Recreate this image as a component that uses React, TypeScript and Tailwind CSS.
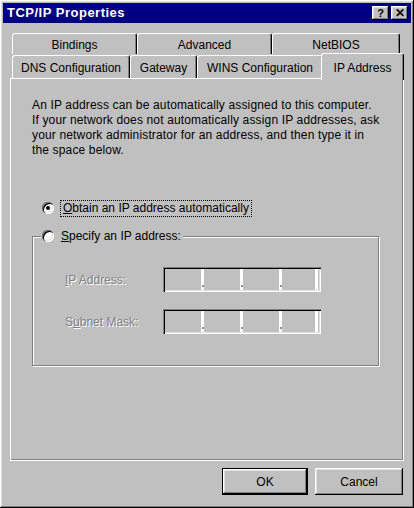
import React from "react";

const raised =
  "shadow-[inset_-1px_-1px_0_#000,inset_1px_1px_0_#fff,inset_-2px_-2px_0_#808080,inset_2px_2px_0_#dfdfdf]";

const Tab = ({ label, w, front }: { label: string; w: string; front?: boolean }) => (
  <div
    className={`${w} h-full flex justify-center items-center border-t border-l border-white border-r border-r-black rounded-t-[3px] shadow-[inset_-1px_0_0_#808080] ${
      front ? "pt-[1px]" : "pt-[2px]"
    }`}
  >
    {label}
  </div>
);

const Radio = ({ checked }: { checked?: boolean }) => (
  <span className="w-[12px] h-[12px] rounded-full bg-white flex items-center justify-center shadow-[inset_1px_1px_0_#808080,inset_2px_2px_0_#000,inset_-1px_-1px_0_#fff,inset_-2px_-2px_0_#dfdfdf]">
    {checked && <span className="w-[4px] h-[4px] rounded-full bg-black" />}
  </span>
);

const IpField = () => (
  <div className="w-[158px] h-[25px] flex px-[2px] py-[2px] shadow-[inset_1px_1px_0_#808080,inset_2px_2px_0_#000,inset_-1px_-1px_0_#fff,inset_-2px_-2px_0_#dfdfdf]">
    {[0, 1, 2, 3].map((i) => (
      <div key={i} className="flex">
        <div className={i === 3 ? "w-[33px]" : "w-[36px]"} />
        <div className="w-[3px] bg-white flex flex-col justify-end items-center pb-[3px]">
          {i < 3 && <span className="w-[2px] h-[2px] bg-[#909090]" />}
        </div>
      </div>
    ))}
  </div>
);

const disabled = "text-[#808080] [text-shadow:1px_1px_0_#fff]";

export default function App() {
  return (
    <div
      className={`w-[414px] h-[508px] bg-[#c0c0c0] p-[3px] flex flex-col text-[12px] text-black ${raised}`}
      style={{ fontFamily: '"Liberation Sans", Arial, sans-serif' }}
    >
      {/* title bar */}
      <div className="h-[20px] bg-[#000080] flex items-center justify-between pl-[4px] pr-[3px]">
        <span className="text-white font-bold text-[13px] tracking-[0.5px]">TCP/IP Properties</span>
        <div className="flex gap-[2px]">
          <div className={`w-[17px] h-[14px] bg-[#c0c0c0] flex items-center justify-center font-bold text-[11px] leading-none ${raised}`}>?</div>
          <div className={`w-[17px] h-[14px] bg-[#c0c0c0] flex items-center justify-center font-bold text-[12px] leading-none ${raised}`}>✕</div>
        </div>
      </div>

      <div className="flex flex-col px-[7px] pt-[10px]">
        {/* tabs */}
        <div className="flex flex-col ml-[2px]">
          <div className="flex h-[21px]">
            <Tab label="Bindings" w="w-[125px]" />
            <Tab label="Advanced" w="w-[135px]" />
            <Tab label="NetBIOS" w="w-[128px]" />
          </div>
          <div className="flex h-[24px] items-end">
            <div className="flex h-[23px]">
              <Tab label="DNS Configuration" w="w-[118px]" front />
              <Tab label="Gateway" w="w-[67px]" front />
              <Tab label="WINS Configuration" w="w-[126px]" front />
            </div>
            <div className="relative z-10 -ml-[2px] -mb-[2px] w-[83px] h-[27px] bg-[#c0c0c0] flex justify-center pt-[5px] border-t border-l border-white border-r border-r-black rounded-t-[3px] shadow-[inset_-1px_0_0_#808080]">
              IP Address
            </div>
          </div>
        </div>

        {/* panel */}
        <div className="w-[394px] h-[383px] border-t border-l border-white border-r border-b border-black shadow-[inset_-1px_-1px_0_#808080] pl-[21px] pt-[19px] flex flex-col">
          <p className="leading-[15px] tracking-[0.15px]">
            An IP address can be automatically assigned to this computer.
            <br />
            If your network does not automatically assign IP addresses, ask
            <br />
            your network administrator for an address, and then type it in
            <br />
            the space below.
          </p>

          <div className="mt-[41px] h-[18px] flex items-center pl-[10px] gap-[6px]">
            <Radio checked />
            <span className="border border-dotted border-black px-[2px] leading-[15px]">
              <span className="underline">O</span>btain an IP address automatically
            </span>
          </div>

          <fieldset className="mt-[10px] w-[347px] h-[139px] border border-[#808080] shadow-[inset_1px_1px_0_#fff,1px_1px_0_#fff]">
            <legend className="ml-[8px] pr-[2px] pl-[1px] bg-[#c0c0c0] h-[18px] flex items-center gap-[7px]">
              <Radio />
              <span className="leading-[15px]">
                <span className="underline">S</span>pecify an IP address:
              </span>
            </legend>

            <div className="grid grid-cols-[98px_158px] gap-y-[17px] pl-[32px] pt-[22px] items-center">
              <span className={disabled}>
                <span className="underline">I</span>P Address:
              </span>
              <IpField />
              <span className={disabled}>
                S<span className="underline">u</span>bnet Mask:
              </span>
              <IpField />
            </div>
          </fieldset>
        </div>

        {/* buttons */}
        <div className="flex justify-end gap-[7px] mt-[7px] pr-[1px]">
          <div className="w-[86px] h-[27px] border border-black">
            <div className={`w-full h-full flex items-center justify-center ${raised}`}>OK</div>
          </div>
          <div className={`w-[88px] h-[27px] flex items-center justify-center ${raised}`}>Cancel</div>
        </div>
      </div>
    </div>
  );
}
